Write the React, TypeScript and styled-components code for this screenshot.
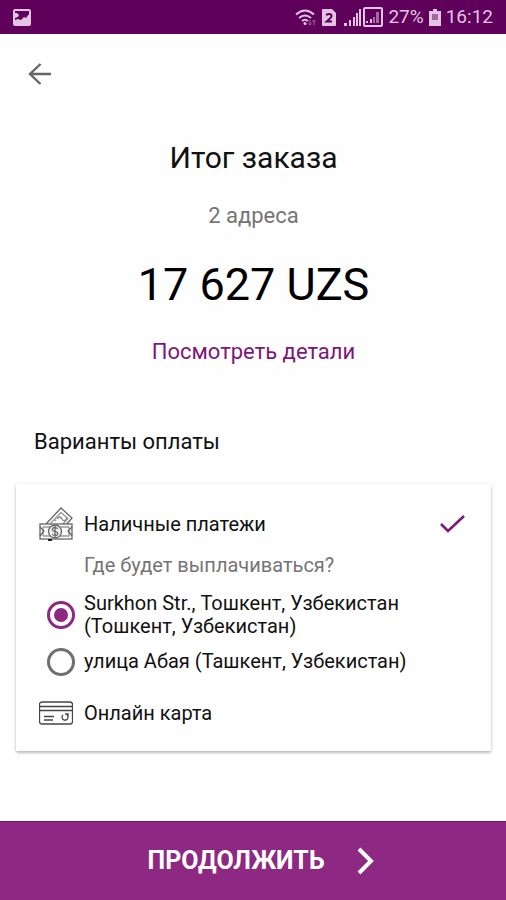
import React, { useState } from "react";
import styled, { createGlobalStyle } from "styled-components";

const GlobalStyle = createGlobalStyle`
  *, *::before, *::after { box-sizing: border-box; }
  body {
    margin: 0;
    background: #fefefe;
    color: #111;
    font-family: Roboto, "Noto Sans", sans-serif;
  }
  button, input { font: inherit; }
`;

const Screen = styled.div`
  display: flex;
  flex-direction: column;
  min-height: 100vh;
`;

const StatusBar = styled.div`
  display: flex;
  align-items: center;
  justify-content: space-between;
  height: 34px;
  padding: 0 13px;
  background: #5f005b;
  color: #e3c4e4;
  font-size: 19px;
  line-height: 34px;
`;

const StatusGroup = styled.div`
  display: flex;
  align-items: center;
  gap: 5px;
`;

const Signals = styled.span`
  display: flex;
  align-items: center;
  padding-left: 3px;
`;

const Icon = styled.svg`
  display: block;
  flex: none;
  fill: none;
`;

const TopBar = styled.header`
  display: flex;
  padding: 20px 20px 0;
`;

const BackButton = styled.button`
  display: grid;
  place-items: center;
  width: 40px;
  height: 40px;
  padding: 0;
  border: 0;
  background: none;
  color: #666;
  cursor: pointer;
`;

const Content = styled.main`
  flex: 1;
  padding: 0 15px 0 16px;
`;

const Summary = styled.section`
  display: flex;
  flex-direction: column;
  align-items: center;
  padding-top: 44px;
  text-align: center;
`;

const Title = styled.h1`
  margin: 0;
  font-size: 30px;
  line-height: 40px;
  font-weight: 400;
`;

const AddressCount = styled.p`
  margin: 24px 0 0;
  color: #757575;
  font-size: 22px;
  line-height: 28px;
`;

const Total = styled.p`
  margin: 28px 0 0;
  color: #000;
  font-size: 45px;
  line-height: 54px;
`;

const DetailsLink = styled.a`
  margin-top: 26px;
  color: #7d1778;
  font-size: 22px;
  line-height: 28px;
  text-decoration: none;
`;

const SectionTitle = styled.h2`
  margin: 62px 0 28px 18px;
  font-size: 22px;
  line-height: 28px;
  font-weight: 400;
`;

const Card = styled.fieldset`
  display: flex;
  flex-direction: column;
  min-width: 0;
  margin: 0;
  padding: 20px 24px 18px 23px;
  border: 0;
  border-radius: 2px;
  background: #fff;
  box-shadow: 0 2px 3px rgba(0, 0, 0, 0.24), 0 0 3px rgba(0, 0, 0, 0.1);
`;

const HiddenRadio = styled.input`
  position: absolute;
  width: 1px;
  height: 1px;
  margin: 0;
  opacity: 0;
`;

const OptionRow = styled.label`
  display: grid;
  grid-template-columns: 34px 1fr auto;
  column-gap: 11px;
  align-items: center;
  min-height: 40px;
  font-size: 20px;
  line-height: 24px;
  cursor: pointer;
`;

const AddressGroup = styled.div`
  display: flex;
  flex-direction: column;
  padding: 9px 0 8px;
`;

const Question = styled.p`
  margin: 0 0 14px 45px;
  color: #757575;
  font-size: 20px;
  line-height: 24px;
`;

const AddressRow = styled.label`
  display: grid;
  grid-template-columns: 28px 1fr;
  column-gap: 9px;
  align-items: center;
  min-height: 47px;
  padding-left: 8px;
  font-size: 20px;
  line-height: 23px;
  cursor: pointer;
`;

const Radio = styled.input`
  appearance: none;
  display: grid;
  place-items: center;
  width: 28px;
  height: 28px;
  margin: 0;
  border: 3px solid #707070;
  border-radius: 50%;

  &:checked {
    border-color: #8d2982;
  }

  &:checked::before {
    content: "";
    width: 14px;
    height: 14px;
    border-radius: 50%;
    background: #8d2982;
  }
`;

const ContinueButton = styled.button`
  display: flex;
  align-items: center;
  justify-content: center;
  gap: 32px;
  width: 100%;
  min-height: 79px;
  padding: 0 0 0 16px;
  border: 0;
  border-top: 1px solid #741269;
  background: #8d2982;
  color: #fff;
  font-size: 25px;
  line-height: 32px;
  font-weight: 700;
  cursor: pointer;
`;

const PictureIcon = () => (
  <Icon width="18" height="17" viewBox="0 0 18 17" aria-hidden="true">
    <rect x="1" y="1" width="16" height="15" rx="1" stroke="#e3c4e4" strokeWidth="2" />
    <path d="M2 11l3-1 3 1 3-3 2 1 3-4v10H2z" fill="#e3c4e4" />
    <path d="M2 4h2l2 2-1 2-3 1z" fill="#e3c4e4" />
  </Icon>
);

const WifiIcon = () => (
  <Icon width="22" height="18" viewBox="0 0 22 18" stroke="#e3c4e4" strokeWidth="2" aria-hidden="true">
    <path d="M1 6.500Q10 -1.500 19 6.500M4 10q6-5 12 0M7 13q3-2.500 6 0" />
    <circle cx="10" cy="15.500" r="1.500" fill="#e3c4e4" stroke="none" />
    <path d="M15 12v5m-1.500-1.500L15 17l1.500-1.500M19 17v-5m-1.500 1.500L19 12l1.500 1.500" stroke="#a568a4" strokeWidth="1" />
  </Icon>
);

const SimIcon = () => (
  <Icon width="14" height="17" viewBox="0 0 14 17" aria-hidden="true">
    <path d="M1 0h9l4 4v12a1 1 0 01-1 1H1a1 1 0 01-1-1V1a1 1 0 011-1z" fill="#e3c4e4" />
    <path d="M4.500 6.500Q4.700 5 7 5q2.500 0 2.500 2Q9.500 8.500 4.700 12.500H10" stroke="#5f005b" strokeWidth="2" />
  </Icon>
);

const SignalIcon = () => (
  <Icon width="18" height="18" viewBox="0 0 18 18" aria-hidden="true">
    <path d="M0 15h3v3H0zM5 12h2v6H5zM9 9h2v9H9zM12 5h2v13h-2zM15 1h2v17h-2z" fill="#e3c4e4" />
  </Icon>
);

const BoxedSignalIcon = () => (
  <Icon width="21" height="20" viewBox="0 0 21 20" aria-hidden="true">
    <rect x="2" y="1" width="18" height="18" rx="1" stroke="#e3c4e4" strokeWidth="2" />
    <path d="M4 14h2v2H4zM8 12h2v4H8z" fill="#e3c4e4" />
    <path d="M11 10h2v6h-2zM14 5h3v11h-3z" fill="#a568a4" />
  </Icon>
);

const BatteryIcon = () => (
  <Icon width="12" height="17" viewBox="0 0 12 17" aria-hidden="true">
    <path d="M4 0h4v2h4v15H0V2h4z" fill="#e3c4e4" />
    <path d="M3 5h6v6H3z" fill="#a568a4" />
  </Icon>
);

const BackIcon = () => (
  <Icon width="24" height="22" viewBox="0 0 24 22" stroke="currentColor" strokeWidth="2.400" aria-hidden="true">
    <path d="M23 11H2M12.500 1L2 11l10.500 10" />
  </Icon>
);

const CashIcon = () => (
  <Icon width="34" height="34" viewBox="0 0 34 34" stroke="#666" strokeWidth="1.300" aria-hidden="true">
    <path d="M7 17L22 1l11 10-6 7" />
    <path d="M11 17L22 5.500l7 6-5 5.500M15 12l2 2M26 9l3 3" stroke="#999" />
    <path d="M18 12q3-4 5 0t5-1" stroke="#888" />
    <rect x="1" y="17" width="32" height="15" fill="#fff" />
    <path d="M4 20h8M4 29h8M21 20h9v9h-9M4 20v9" stroke="#999" />
    <path d="M1 20l4 4-4 5M33 20l-4 4 4 5" />
    <circle cx="16" cy="24.500" r="6.500" fill="#eee" />
    <path d="M19 21.500q-5-2-5.500 0.500t3 2.500q3 1 2 3t-5.500 0M16 19v11" />
    <path d="M9 33h4" stroke="#222" strokeWidth="2" />
  </Icon>
);

const BankCardIcon = () => (
  <Icon width="34" height="24" viewBox="0 0 34 24" stroke="#444" aria-hidden="true">
    <rect x="0.500" y="1" width="33" height="22" rx="2.500" strokeWidth="1.300" />
    <path d="M1 5.500h32M1 9.500h32" strokeWidth="1.300" />
    <path d="M5 15.500h10M5 19h9" strokeWidth="1.300" />
    <path d="M28 14a3 3 0 11-4 0M26 13h3v3" strokeWidth="1.300" />
  </Icon>
);

const CheckIcon = () => (
  <Icon width="30" height="20" viewBox="0 0 30 20" stroke="#7d1778" strokeWidth="2.600" aria-hidden="true">
    <path d="M4 10l7 7L27 2" />
  </Icon>
);

const ChevronIcon = () => (
  <Icon width="18" height="28" viewBox="0 0 18 28" stroke="#fff" strokeWidth="4" aria-hidden="true">
    <path d="M2 2l12 12L2 26" />
  </Icon>
);

type Method = "cash" | "card";

const methods: Record<Method, string> = {
  cash: "Наличные платежи",
  card: "Онлайн карта",
};

const addresses = [
  "Surkhon Str., Тошкент, Узбекистан (Тошкент, Узбекистан)",
  "улица Абая (Ташкент, Узбекистан)",
];

export default function App() {
  const [method, setMethod] = useState<Method>("cash");
  const [address, setAddress] = useState(0);

  const renderMethod = (value: Method, icon: React.ReactNode) => (
    <OptionRow>
      {icon}
      <span>
        <HiddenRadio
          type="radio"
          name="method"
          checked={method === value}
          onChange={() => setMethod(value)}
        />
        {methods[value]}
      </span>
      {method === value && <CheckIcon />}
    </OptionRow>
  );

  return (
    <Screen>
      <GlobalStyle />
      <StatusBar>
        <PictureIcon />
        <StatusGroup>
          <WifiIcon />
          <SimIcon />
          <Signals>
            <SignalIcon />
            <BoxedSignalIcon />
          </Signals>
          <span>27%</span>
          <BatteryIcon />
          <span>16:12</span>
        </StatusGroup>
      </StatusBar>
      <TopBar>
        <BackButton type="button" aria-label="Назад">
          <BackIcon />
        </BackButton>
      </TopBar>
      <Content>
        <Summary>
          <Title>Итог заказа</Title>
          <AddressCount>2 адреса</AddressCount>
          <Total>17 627 UZS</Total>
          <DetailsLink href="#details">Посмотреть детали</DetailsLink>
        </Summary>
        <SectionTitle id="payment-title">Варианты оплаты</SectionTitle>
        <Card aria-labelledby="payment-title">
          {renderMethod("cash", <CashIcon />)}
          <AddressGroup role="radiogroup" aria-labelledby="question">
            <Question id="question">Где будет выплачиваться?</Question>
            {addresses.map((text, index) => (
              <AddressRow key={text}>
                <Radio
                  type="radio"
                  name="address"
                  checked={address === index}
                  onChange={() => setAddress(index)}
                />
                <span>{text}</span>
              </AddressRow>
            ))}
          </AddressGroup>
          {renderMethod("card", <BankCardIcon />)}
        </Card>
      </Content>
      <ContinueButton type="button">
        ПРОДОЛЖИТЬ
        <ChevronIcon />
      </ContinueButton>
    </Screen>
  );
}
